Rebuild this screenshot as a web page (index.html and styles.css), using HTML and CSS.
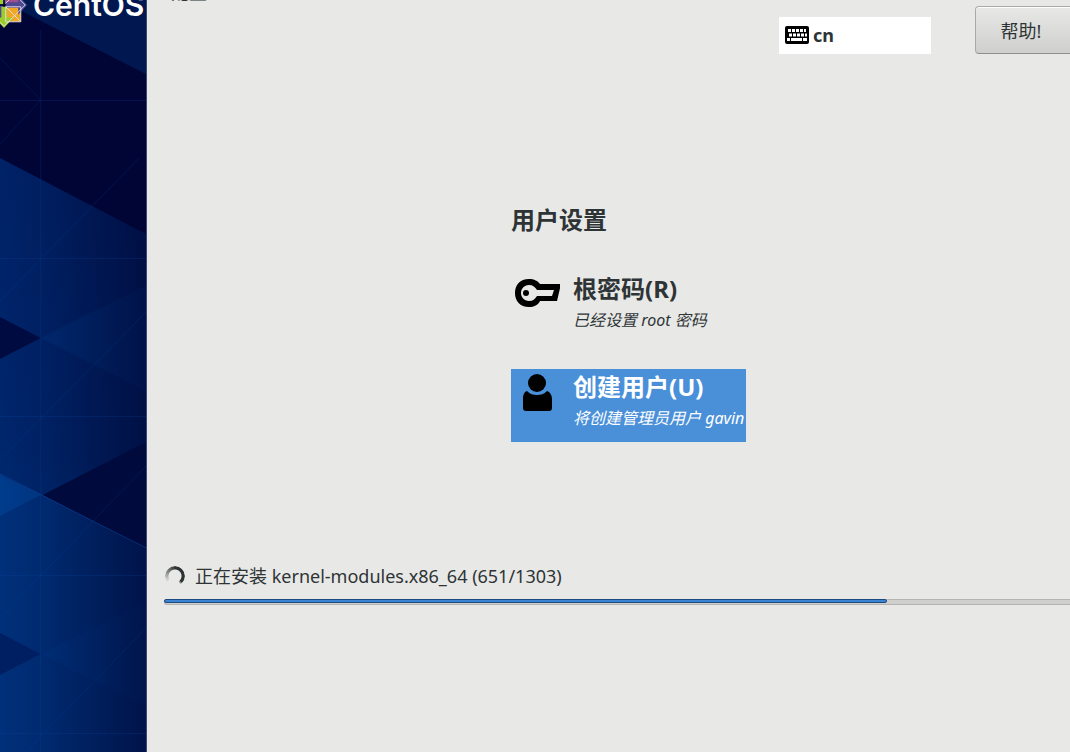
FILE: index.html
```html
<!DOCTYPE html>
<html lang="zh-CN">
<head>
    <meta charset="UTF-8">
    <meta name="viewport" content="width=device-width, initial-scale=1.0">
    <title>CentOS 安装</title>
    <link rel="stylesheet" href="styles.css">
</head>
<body>
<div class="installer">
    <aside class="sidebar">
        <svg class="art" viewBox="0 0 147 752" preserveAspectRatio="none" aria-hidden="true">
            <defs>
                <linearGradient id="shade" x1="0" x2="1" y1="0" y2="0">
                    <stop offset="0" stop-color="#000633" stop-opacity="0"/>
                    <stop offset="0.3" stop-color="#000633" stop-opacity="0.15"/>
                    <stop offset="1" stop-color="#000633" stop-opacity="0.68"/>
                </linearGradient>
                <linearGradient id="base" x1="0" x2="0" y1="0" y2="1">
                    <stop offset="0" stop-color="#002064"/>
                    <stop offset="0.6" stop-color="#00266c"/>
                    <stop offset="1" stop-color="#00367f"/>
                </linearGradient>
            </defs>
            <rect width="147" height="752" fill="url(#base)"/>
            <path d="M0 475L147 549V752H0z" fill="#00307a"/>
            <path d="M41 338L147 285V391z" fill="#002d76"/>
            <path d="M41 654L147 602V706z" fill="#003480"/>
            <path d="M0 475L41 495L0 516z" fill="#003c8c"/>
            <rect width="147" height="752" fill="url(#shade)"/>
            <path d="M0 0L147 74V234L0 158z" fill="#000536"/>
            <path d="M0 0L147 74V0z" fill="#00184f"/>
            <path d="M0 317L41 338L0 359z" fill="#000c41"/>
            <path d="M43 495L147 442V549z" fill="#000a3d"/>
            <path d="M0 633L41 654L0 675z" fill="#001f63"/>
            <g stroke="#0b4aa0" stroke-opacity="0.22" fill="none">
                <path d="M41 30V752M0 100.500H147M0 258.500H147M0 416.500H147M0 575.500H147M0 733.500H147"/>
                <path d="M0 58L41 100L0 144M0 301L140 158M0 460L147 312M0 618L147 466M26 752L147 628"/>
            </g>
            <path d="M0 474L147 548" stroke="#0d4ba2" stroke-opacity="0.6"/>
        </svg>
        <div class="brand">
            <svg class="logo" viewBox="0 0 52 52" aria-hidden="true">
                <path d="M7 7H25V25H7z" fill="#9ccd2a"/>
                <path d="M27 7H45V25H27z" fill="#a14f8c"/>
                <path d="M7 27H25V45H7z" fill="#4f4a91"/>
                <path d="M28 28H45V45H28z" fill="#efa724"/>
                <path d="M26 0L36 10H16z" fill="#efa724"/>
                <path d="M52 26L42 37V29H28V23H42V15z" fill="#4f4a91"/>
                <path d="M0 26L10 16V36z" fill="#932279"/>
                <path d="M26 52L15 40H23V28H29V40H37z" fill="#9ccd2a"/>
                <path d="M26 2L50 26L26 50L2 26zM28 28L44 44M44 8L28 24M28 28H45V45H28z" fill="none" stroke="#e6e0ee" stroke-width="1"/>
            </svg>
            <span class="brand-name">CentOS</span>
        </div>
    </aside>
    <main class="content">
        <header class="topbar">
            <h1 class="page-title">配置</h1>
            <div class="top-right">
                <p class="product">CENTOS 8 安装</p>
                <div class="tools">
                    <button type="button" class="keyboard">
                        <svg width="24" height="18" viewBox="0 0 24 18" aria-hidden="true">
                            <rect width="24" height="18" rx="2" fill="#000"/>
                            <path d="M3 4.500H21" stroke="#fff" stroke-width="3" stroke-dasharray="3 1"/>
                            <path d="M4 9H22" stroke="#fff" stroke-width="3" stroke-dasharray="3 1"/>
                            <path d="M2 13.500H5M6 13.500H17M18 13.500H22" stroke="#fff" stroke-width="3"/>
                        </svg>
                        <span>cn</span>
                    </button>
                    <button type="button" class="help">帮助!</button>
                </div>
            </div>
        </header>

        <section class="settings">
            <h2>用户设置</h2>
            <button type="button" class="spoke">
                <svg class="spoke-icon" viewBox="0 0 48 40" aria-hidden="true">
                    <path d="M17 6C8 6 3 12 3 20s5 14 14 14c5 0 9-2 11-6h17l4-17H28c-2-3-6-5-11-5z" fill="#000"/>
                    <path d="M17 12c-5 0-8 4-8 8s3 8 8 8c4 0 6-2 8-5h15l2-6H25c-2-3-4-5-8-5z" fill="#e8e8e6"/>
                    <circle cx="14" cy="20" r="3" fill="#000"/>
                </svg>
                <span class="spoke-text">
                    <span class="spoke-title">根密码(R)</span>
                    <span class="spoke-status">已经设置 root 密码</span>
                </span>
            </button>
            <button type="button" class="spoke selected">
                <svg class="spoke-icon" viewBox="0 0 48 40" aria-hidden="true">
                    <circle cx="25" cy="12" r="9" fill="#000"/>
                    <path d="M15 20c3 3 6 4 10 4s7-1 10-4c3 1 5 4 5 8v9q0 3-3 3H14q-3 0-3-3v-9c0-4 1-7 4-8z" fill="#000"/>
                </svg>
                <span class="spoke-text">
                    <span class="spoke-title">创建用户(U)</span>
                    <span class="spoke-status">将创建管理员用户 gavin</span>
                </span>
            </button>
        </section>

        <section class="install">
            <div class="install-status">
                <span class="spinner"></span>
                <label for="installProgress">正在安装 kernel-modules.x86_64 (651/1303)</label>
            </div>
            <progress id="installProgress" value="799" max="1000"></progress>
        </section>
    </main>
</div>
</body>
</html>
```
FILE: styles.css
```css
* {
    box-sizing: border-box;
}

body {
    margin: 0;
    background: #e8e8e6;
    color: #2e3436;
    font-family: "Noto Sans", "Noto Sans CJK SC", sans-serif;
    overflow: hidden;
}

h1, h2, p {
    margin: 0;
}

button {
    font-family: inherit;
    color: inherit;
    cursor: pointer;
}

.installer {
    display: flex;
    min-height: 100vh;
}

/* sidebar */
.sidebar {
    position: relative;
    flex: 0 0 147px;
    overflow: hidden;
    background: #001a55;
    border-right: 1px solid #3d4a77;
}

.art {
    position: absolute;
    inset: 0;
    width: 100%;
    height: 100%;
}

.brand {
    position: relative;
    display: flex;
    align-items: center;
    gap: 6px;
    margin: -18px 0 0 -19px;
}

.logo {
    flex: none;
    width: 46px;
    height: 46px;
}

.brand-name {
    color: #fff;
    font: 600 30px/40px Inter, sans-serif;
}

/* main area */
.content {
    flex: 1;
    min-width: 0;
    display: flex;
    flex-direction: column;
    overflow: hidden;
}

.topbar {
    display: flex;
    justify-content: space-between;
    margin-top: -21px;
    padding-left: 24px;
}

.page-title,
.product {
    font-size: 18px;
    font-weight: bold;
    line-height: 26px;
}

.top-right {
    display: flex;
    flex-direction: column;
    align-items: flex-end;
}

.product {
    margin-right: -40px;
}

.tools {
    display: flex;
    align-items: center;
    gap: 44px;
    margin-top: 1px;
}

.keyboard {
    display: flex;
    align-items: center;
    gap: 4px;
    width: 152px;
    height: 37px;
    margin-top: 10px;
    padding: 0 6px;
    border: 0;
    background: #fff;
    font-size: 18px;
    font-weight: bold;
}

.help {
    width: 100px;
    height: 48px;
    margin-right: -5px;
    padding: 0 8px 0 0;
    border: 1px solid #a9a9a6;
    border-bottom-color: #8f8f8c;
    border-radius: 4px;
    background: linear-gradient(#e8e8e7, #cfcfcd);
    box-shadow: inset 0 1px #fff;
    font-size: 18px;
}

.settings {
    width: 235px;
    margin: 148px auto 0 364px;
}

h2 {
    margin-bottom: 33px;
    font-size: 24px;
    line-height: 36px;
}

.spoke {
    display: flex;
    width: 100%;
    height: 73px;
    margin-bottom: 25px;
    padding: 2px 0 0 1px;
    border: 0;
    background: none;
    text-align: left;
    overflow: hidden;
}

.spoke.selected {
    background: #4a90d9;
    color: #fff;
}

.spoke-icon {
    flex: none;
    width: 48px;
    height: 40px;
    margin-right: 13px;
}

.spoke-title,
.spoke-status {
    display: block;
    white-space: nowrap;
}

.spoke-title {
    font-size: 24px;
    font-weight: bold;
    line-height: 32px;
}

.spoke-status {
    font-size: 16px;
    font-style: italic;
    line-height: 30px;
}

/* progress */
.install {
    margin: 95px 0 0 17px;
}

.install-status {
    display: flex;
    align-items: center;
    gap: 10px;
    font-size: 18px;
    line-height: 28px;
}

.spinner {
    width: 20px;
    height: 20px;
    margin-left: 1px;
    border-radius: 50%;
    background: conic-gradient(#2e3436 0deg 130deg, transparent 150deg 230deg, #2e3436 360deg);
    -webkit-mask: radial-gradient(circle, transparent 6px, #000 7px);
    mask: radial-gradient(circle, transparent 6px, #000 7px);
}

progress {
    display: block;
    width: 100%;
    height: 6px;
    margin-top: 9px;
    appearance: none;
    border: 0;
}

progress::-webkit-progress-bar {
    background: #cfcfcd;
    border: 1px solid #b4b4b1;
    border-right: 0;
    border-radius: 3px 0 0 3px;
}

progress::-webkit-progress-value {
    margin: -1px;
    height: 6px;
    background: #3c84d2;
    border: 1px solid #1b4a80;
    border-radius: 2px;
}
```
